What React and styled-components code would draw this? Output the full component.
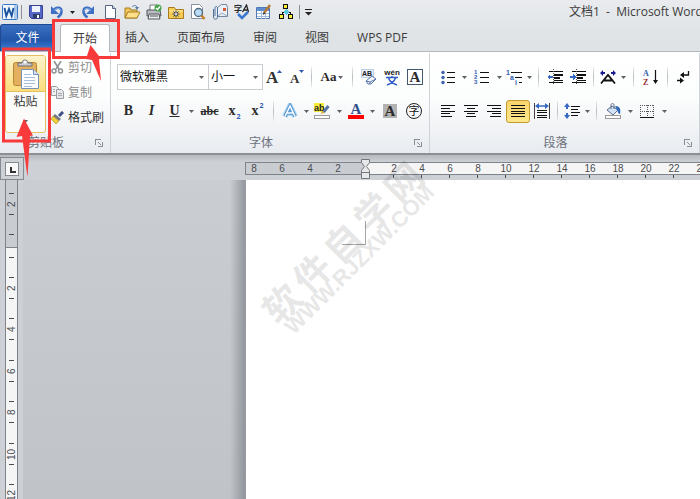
import React from 'react';
import styled, { createGlobalStyle, css } from 'styled-components';

const GlobalStyle = createGlobalStyle`
  * {
    box-sizing: border-box;
  }

  body {
    margin: 0;
    font-family: 'Open Sans', 'Noto Sans CJK SC', sans-serif;
    font-size: 12px;
    line-height: 16px;
    color: #3b3b3b;
  }

  button,
  select {
    font: inherit;
    color: inherit;
    margin: 0;
    padding: 0;
    border: 0;
    background: none;
  }
`;

const Window = styled.div`
  position: relative;
  display: flex;
  flex-direction: column;
  height: 100vh;
  overflow: hidden;
  background: #c9cdd2;
`;

const Header = styled.header`
  flex: none;
  background: linear-gradient(#e9ebef 0%, #e0e4e6 60%, #dfe3e5 100%);
`;

const TitleBar = styled.div`
  display: flex;
  align-items: center;
  height: 24px;
`;

const QuickButton = styled.button`
  display: flex;
  flex: none;
  align-items: center;
  justify-content: center;
  width: ${props => props.$width || 22}px;
  height: 22px;
`;

const QuickDivider = styled.span`
  flex: none;
  width: 1px;
  height: 14px;
  margin: 0 3px 0 2px;
  background: #8c9096;
`;

const WindowTitle = styled.h1`
  width: 131px;
  margin: 0 0 0 auto;
  font-size: 12px;
  font-weight: 400;
  white-space: pre;
`;

const TabBar = styled.nav`
  display: flex;
  height: 28px;
  border-bottom: 1px solid #b4b8bd;
`;

const FileTab = styled.button`
  width: 55px;
  margin-right: 4px;
  border: 1px solid #1d4a93;
  border-bottom: 0;
  border-radius: 3px 3px 0 0;
  background: linear-gradient(#3a70c2 0%, #2559ab 50%, #2258ad 60%, #3b83d8 100%);
  color: #fff;
`;

const Tab = styled.button`
  padding: 0 14px;

  ${props => props.$active && css`
    margin: 0 1px -1px;
    padding: 0 12px;
    border: 1px solid #b4b8bd;
    border-bottom: 0;
    border-radius: 3px 3px 0 0;
    background: #fff;
  `}
`;

const Ribbon = styled.section`
  display: flex;
  flex: none;
  height: 103px;
  padding-top: 1px;
  border-bottom: 2px solid #8b8f96;
  background: linear-gradient(#fff 0%, #fcfdfd 45%, #e8ebf0 100%);
`;

const Group = styled.div`
  display: flex;
  flex: none;
  flex-direction: column;
  border-right: 1px solid #cfd2d7;
`;

const GroupBody = styled.div`
  display: flex;
  flex: 1;
  flex-direction: column;
  gap: 6px;
  padding: 10px 3px 0 6px;
`;

const ClipboardBody = styled.div`
  display: flex;
  flex: 1;
  padding: 2px 6px 0 5px;
`;

const GroupFooter = styled.div`
  display: flex;
  align-items: center;
  height: 20px;
  padding-right: 4px;
`;

const GroupLabel = styled.span`
  flex: 1;
  color: #6c717c;
  text-align: center;
`;

const Launcher = styled.button`
  display: flex;
  width: 14px;
  height: 14px;
  align-items: center;
  justify-content: center;
`;

const PasteButton = styled.button`
  display: flex;
  flex-direction: column;
  align-items: center;
  width: 41px;
  height: 78px;
  border: 1px solid #e3c05d;
  border-radius: 3px;
  background: #fbfbfa;
  overflow: hidden;
`;

const PasteIconArea = styled.span`
  display: flex;
  align-items: center;
  justify-content: center;
  width: 100%;
  height: 37px;
  margin-bottom: 2px;
  border-bottom: 1px solid #e3c05d;
  background: linear-gradient(#fdf3cd, #fbdd7c);
`;

const ClipboardList = styled.div`
  display: flex;
  flex-direction: column;
  padding-left: 5px;
`;

const ClipboardButton = styled.button`
  display: flex;
  align-items: center;
  gap: 4px;
  height: 25px;
  color: ${props => (props.disabled ? '#8d8d8d' : '#2f2f2f')};
`;

const ToolRow = styled.div`
  display: flex;
  align-items: center;
  height: 28px;
`;

const ToolButton = styled.button`
  display: flex;
  flex: none;
  align-items: center;
  justify-content: center;
  gap: 2px;
  width: ${props => props.$width || 23}px;
  height: 23px;

  ${props => props.$active && css`
    border: 1px solid #c29a2e;
    border-radius: 3px;
    background: linear-gradient(#fbd46c, #fde88b);
  `}
`;

const CaretButton = styled(ToolButton)`
  width: 10px;
`;

const Divider = styled.span`
  flex: none;
  width: 1px;
  height: 20px;
  margin: 0 ${props => props.$gap || 4}px;
  background: linear-gradient(#e8e9ec, #b9bcc2, #e8e9ec);
`;

const Glyph = styled.span`
  font-family: 'Liberation Serif', serif;
  font-size: ${props => props.$size || 14}px;
  font-weight: 700;
  font-style: ${props => (props.$italic ? 'italic' : 'normal')};
  text-decoration: ${props => props.$line || 'none'};
  color: #2b2b2b;
`;

const Script = styled.small`
  align-self: ${props => (props.$up ? 'flex-start' : 'flex-end')};
  margin-left: -1px;
  font-size: 7px;
  font-weight: 700;
  line-height: 12px;
  color: #2f5cb0;
`;

const ComboBox = styled.label`
  position: relative;
  display: flex;
  flex: none;
  width: ${props => props.$width}px;
  height: 26px;
  margin-right: -1px;
  border: 1px solid #c9ccd1;
  background: #fff;

  select {
    width: 100%;
    padding: 0 2px;
    appearance: none;
    color: #111;
  }

  svg {
    position: absolute;
    top: 11px;
    right: 4px;
    pointer-events: none;
  }
`;

const Workspace = styled.main`
  display: flex;
  flex: 1;
  flex-direction: column;
  min-height: 0;
`;

const RulerBar = styled.div`
  display: flex;
  flex: none;
  align-items: flex-start;
  height: 25px;
  padding-top: 2px;
  background: linear-gradient(#b6b9be 0, #cdd0d5 7px);
`;

const TabSelector = styled.button`
  display: flex;
  flex: none;
  align-items: center;
  justify-content: center;
  width: 24px;
  height: 23px;
  border: 1px solid #868a90;
  background: #cdd0d5;
`;

const RulerTrack = styled.div`
  display: flex;
  flex: 1;
  min-width: 0;
  margin: 5px 0 0 221px;
`;

const RulerPart = styled.div`
  display: flex;
  flex: ${props => (props.$margin ? 'none' : '1')};
  justify-content: ${props => (props.$margin ? 'flex-end' : 'flex-start')};
  width: ${props => (props.$margin ? '121px' : 'auto')};
  height: 13px;
  padding: 0 ${props => (props.$margin ? 14 : 0)}px 0 ${props => (props.$margin ? 0 : 15)}px;
  border: solid #7f838b;
  border-width: 1px 0 1px ${props => (props.$margin ? 1 : 0)}px;
  background: ${props => (props.$margin ? '#c9cdd2' : '#f5f5f5')};
  min-width: 0;
`;

const RulerCell = styled.span`
  position: relative;
  flex: none;
  width: 28px;
  font-family: 'Liberation Sans', sans-serif;
  font-size: 10px;
  line-height: 11px;
  text-align: center;
  color: #4a4c50;

  &::after {
    content: '';
    position: absolute;
    left: 13px;
    top: 12px;
    width: 1px;
    height: 3px;
    background: ${props => (props.$tick ? '#4a4c50' : 'none')};
  }
`;

const IndentMarker = styled.svg`
  position: relative;
  flex: none;
  z-index: 1;
  margin: -4px -5px -6px;
`;

const Canvas = styled.div`
  display: flex;
  flex: 1;
  min-height: 0;
`;

const SideRuler = styled.div`
  display: flex;
  flex: none;
  flex-direction: column;
  width: 23px;
  padding: 0 5px;
  background: #cdd0d5;
  overflow: hidden;
`;

const SidePart = styled.div`
  flex: none;
  height: ${props => (props.$margin ? '68px' : 'auto')};
  padding-top: ${props => (props.$margin ? '3px' : '0')};
  border: solid #7f838b;
  border-width: 0 1px ${props => (props.$margin ? 1 : 0)}px;
  background: ${props => (props.$margin ? '#c9cdd2' : '#f5f5f5')};
`;

const SideCell = styled.div`
  display: flex;
  flex-direction: column;
  align-items: center;
  justify-content: center;
  height: 41px;

  &:nth-child(odd) {
    height: 42px;
  }
`;

const SideLead = styled.div`
  display: flex;
  align-items: center;
  justify-content: center;
  height: 19px;
`;

const SideTick = styled.i`
  width: 5px;
  height: 1px;
  background: #4a4c50;
`;

const SideNumber = styled.span`
  height: 20px;
  font-family: 'Liberation Sans', sans-serif;
  font-size: 10px;
  line-height: 11px;
  text-align: center;
  color: #4a4c50;
  writing-mode: vertical-rl;
  transform: rotate(180deg);
`;

const Gutter = styled.div`
  display: flex;
  flex: none;
  justify-content: flex-end;
  width: 223px;
  background: linear-gradient(#cacdd2, #c0c4c9);
`;

const PageShadow = styled.div`
  width: 16px;
  border-right: 1px solid #999ca1;
  background: linear-gradient(to right, rgba(130, 134, 140, 0), rgba(130, 134, 140, 0.75));
`;

const Paper = styled.article`
  position: relative;
  flex: 1;
  padding: 41px 0 0 96px;
  background: #fff;
`;

const MarginCorner = styled.div`
  width: 24px;
  height: 24px;
  border: solid #a6a6a6;
  border-width: 0 1px 1px 0;
`;

const Watermark = styled.div`
  position: absolute;
  left: -9px;
  top: 43px;
  width: 220px;
  color: #000;
  opacity: 0.09;
  pointer-events: none;
  transform: rotate(-45deg);
`;

const WatermarkName = styled.div`
  display: flex;
  justify-content: center;
  gap: 6px;
  font-size: 37px;
  font-weight: 700;
  line-height: 36px;
`;

const WatermarkUrl = styled.div`
  font-family: 'Liberation Sans', sans-serif;
  font-size: 22px;
  font-weight: 700;
  line-height: 12px;
  text-align: center;
`;

const Marks = styled.svg`
  position: absolute;
  left: 0;
  top: 0;
  pointer-events: none;
`;

const Icon = ({ size = 16, crisp, children }) => (
  <svg
    width={size}
    height={size}
    viewBox={`0 0 ${size} ${size}`}
    shapeRendering={crisp ? 'crispEdges' : 'auto'}
    fill="none"
    aria-hidden="true"
  >
    {children}
  </svg>
);

const Caret = ({ color = '#5c5f64' }) => (
  <svg width="5" height="3" viewBox="0 0 5 3" aria-hidden="true">
    <path d="M0 0h5L2.500 3z" fill={color} />
  </svg>
);

const WordIcon = () => (
  <Icon>
    <rect x=".5" y=".5" width="15" height="15" rx="1" fill="#f2f7fd" stroke="#3a78c8" />
    <path d="M13.500 1v14" stroke="#a9c8ec" strokeWidth="3" />
    <path d="M2.500 4l1.800 8 2.700-7 2.700 7 1.800-8" stroke="#1c559f" strokeWidth="1.900" />
  </Icon>
);

const SaveIcon = () => (
  <Icon>
    <path d="M1.500 1.500h13v13h-11l-2-2z" fill="#5667c8" stroke="#3a3f94" />
    <path d="M4 2h8v6H4z" fill="#eef3fb" />
    <path d="M5 10h7v4H5z" fill="#2b3f68" />
    <path d="M9 11h2v3H9z" fill="#fff" />
  </Icon>
);

const UndoIcon = ({ flip }) => (
  <Icon>
    <g transform={flip ? 'translate(16 0) scale(-1 1)' : undefined}>
      <path d="M4 7C7 2 13 3 12.500 8c-.3 2-1.500 4-4 5.500" stroke="#3e6fc4" strokeWidth="2.500" />
      <path d="M2 2v8h8z" fill="#3e6fc4" />
      <path d="M5 6.500C8 3.500 11.500 4 12 7" stroke="#8fb4ec" />
    </g>
  </Icon>
);

const NewIcon = () => (
  <Icon>
    <path d="M3.500 1.500h7l3 3v10h-10z" fill="#fbfdff" stroke="#53647f" />
    <path d="M10.500 1.500v3h3" fill="#d6e2f2" stroke="#53647f" />
  </Icon>
);

const OpenIcon = () => (
  <Icon>
    <path d="M1 4h5l1 2h6v8H1z" fill="#f0c557" stroke="#a57a22" />
    <path d="M1 14l3-6h12l-3 6z" fill="#ffe08a" stroke="#a57a22" />
    <path d="M8 3c2-2 4-2 5 0" stroke="#5679a8" />
    <path d="M11 3h4l-2 3z" fill="#5679a8" />
  </Icon>
);

const PrintIcon = () => (
  <Icon>
    <path d="M4 1h7v6H4z" fill="#fff" stroke="#74777e" />
    <path d="M1 6h13l1 6H1z" fill="#b9bcc3" stroke="#52555b" />
    <path d="M3 10h10l1 5H2z" fill="#e9ebee" stroke="#52555b" />
    <path d="M4 12h8" stroke="#52555b" />
    <circle cx="12" cy="4" r="3.500" fill="#46a24b" />
    <path d="M10 4l1.500 1.500L14 2.500" stroke="#fff" strokeWidth="1.300" />
  </Icon>
);

const FavoriteFolderIcon = () => (
  <Icon>
    <path d="M.5 3.500h6l1 2h8v9H.5z" fill="#f6cb51" stroke="#a57a22" />
    <path d="M1 7h14" stroke="#fff0b0" />
    <path d="M8 6.500v7M4.500 10h7M5.500 7.500l5 5M10.500 7.500l-5 5" stroke="#26386f" />
    <circle cx="8" cy="10" r="1" fill="#fff" />
  </Icon>
);

const PreviewIcon = () => (
  <Icon>
    <path d="M1.500.5h8l3 3v11h-11z" fill="#fff" stroke="#8791a3" />
    <circle cx="8.500" cy="8.500" r="4" fill="#b9dcf7" stroke="#52677e" strokeWidth="1.300" />
    <path d="M11.500 11.500l3 3.500" stroke="#c77e25" strokeWidth="2.500" />
  </Icon>
);

const MailIcon = () => (
  <Icon>
    <path d="M5.500 3.500l4-3h5l1 3v9h-10z" fill="#e8eff9" stroke="#74859f" />
    <path d="M6 12l4-3 5 3" stroke="#9aacbf" />
    <path d="M11 4h3v3h-3z" fill="#d65b34" />
    <path d="M1.500 5v8c0 3 4 3 4 0V4c0-2-2.500-2-2.500 0v8" stroke="#53739f" />
  </Icon>
);

const SpellIcon = () => (
  <Icon>
    <text x="0" y="8" fontSize="8" fontWeight="700" fill="#252525" fontFamily="Noto Sans CJK SC">字</text>
    <path d="M8.500 8l4-7 2 7M10 6h4" stroke="#252525" strokeWidth="1.300" />
    <path d="M4 10l4 4 6-6" stroke="#3a76d0" strokeWidth="2.500" />
  </Icon>
);

const DrawTableIcon = () => (
  <Icon>
    <path d="M.5 3.500h13v11H.5z" fill="#fff" stroke="#5179b3" />
    <path d="M1 4h12v3H1z" fill="#5e8ed2" />
    <path d="M1 9.500h12M1 12.500h12M5.500 7v8M9.500 7v8" stroke="#a3bbdc" />
    <path d="M8 9l6-8" stroke="#b57a35" strokeWidth="2.500" />
    <path d="M7 11l.5-3 2 1.500z" fill="#333" />
  </Icon>
);

const OrgChartIcon = () => (
  <Icon crisp>
    <path d="M8 5v5M4 10V8h3M12 10V8H9" stroke="#111" />
    <rect x="5.500" y=".5" width="4" height="4" fill="#f7ef39" stroke="#111" />
    <rect x="1.500" y="10.500" width="4" height="4" fill="#f7ef39" stroke="#111" />
    <rect x="10.500" y="10.500" width="4" height="4" fill="#f7ef39" stroke="#111" />
    <path d="M8 5l3 3-3 3-3-3z" fill="#54cbe0" />
  </Icon>
);

const PasteIcon = () => (
  <Icon size={32}>
    <rect x="3.500" y="4.500" width="23" height="23" rx="2" fill="#e3b060" stroke="#b98636" />
    <path d="M8 8V5h4c0-4 6-4 6 0h4v3z" fill="#c9ccd0" stroke="#6c6f73" />
    <circle cx="15" cy="4" r="1.500" fill="#fff" />
    <path d="M11.500 11.500h12l5 5v14h-17z" fill="#fbfdff" stroke="#7690b8" />
    <path d="M23.500 11.500v5h5" fill="#d2e1f3" stroke="#7690b8" />
    <path d="M14 16.500h7M14 19.500h11M14 22.500h11M14 25.500h11M14 28.500h8" stroke="#a7bedd" />
  </Icon>
);

const CutIcon = () => (
  <Icon size={13}>
    <path d="M3 0l5 8M10 0L5 8" stroke="#8e9196" strokeWidth="1.600" />
    <circle cx="3" cy="10" r="2" stroke="#8e9196" strokeWidth="1.500" />
    <circle cx="9.500" cy="10" r="2" stroke="#8e9196" strokeWidth="1.500" />
  </Icon>
);

const CopyIcon = () => (
  <Icon size={13}>
    <path d="M.5.5h5l2 2v7h-7z" fill="#f2f2f3" stroke="#9a9da2" />
    <path d="M5.500 3.500h5l2 2v7h-7z" fill="#e6e7e9" stroke="#9a9da2" />
    <path d="M7 7.500h4M7 9.500h4M2 3.500h2M2 5.500h2" stroke="#a5a8ad" />
  </Icon>
);

const BrushIcon = () => (
  <Icon size={13}>
    <path d="M12 1L8 5" stroke="#3d4f86" strokeWidth="3" />
    <path d="M4 3l6 5-2 2-6-5z" fill="#6f7684" />
    <path d="M2 5l6 5-3 3-5-5z" fill="#f0cf3c" stroke="#a88a1d" strokeWidth=".6" />
  </Icon>
);

const LauncherIcon = () => (
  <Icon size={8} crisp>
    <path d="M.5 6V.5H6M3 3l3 3M7.500 3v4.500H3" stroke="#898d94" />
  </Icon>
);

const FontSizeIcon = ({ down }) => (
  <Icon size={18}>
    <text x={down ? 2 : 1} y="15" fontSize={down ? 13 : 17} fontWeight="700" fontFamily="Liberation Serif" fill="#333">A</text>
    <path d={down ? 'M11 2h5l-2.500 3z' : 'M12 5h5l-2.500-3z'} fill="#2f5cb0" />
  </Icon>
);

const EraserIcon = () => (
  <Icon>
    <rect x=".5" y=".5" width="12" height="8" fill="#e5eefb" stroke="#c3cfe2" />
    <text x="1" y="7" fontSize="7" fontWeight="700" fontFamily="Liberation Sans" fill="#222">AB</text>
    <path d="M5 12l6-5 4 3-5 5H7z" fill="#f3f6fb" stroke="#5875aa" />
    <path d="M5 12l4 1 6-3M9 13v2" stroke="#5875aa" />
  </Icon>
);

const PhoneticIcon = () => (
  <Icon size={18}>
    <text x="9" y="7" textAnchor="middle" fontSize="8" fontWeight="700" fontFamily="Liberation Sans" fill="#222">wén</text>
    <path d="M3 9.500h12M9 8v2M5.500 10c1 3 4 5.500 8.500 7M12.500 10c-1 3-4 5.500-8.500 7" stroke="#2f5cc4" strokeWidth="1.500" />
  </Icon>
);

const BoxedIcon = ({ shaded }) => (
  <Icon>
    {shaded
      ? <rect x="1" y="1" width="14" height="14" fill="#b3b3b3" />
      : <rect x=".5" y=".5" width="15" height="15" fill="#fff" stroke="#46586f" />}
    <text x="8" y="13" textAnchor="middle" fontSize="15" fontWeight="700" fontFamily="Liberation Serif" fill="#2b2b2b">A</text>
  </Icon>
);

const EncloseIcon = () => (
  <Icon>
    <circle cx="8" cy="8" r="7.500" stroke="#222" />
    <text x="8" y="12" textAnchor="middle" fontSize="11" fontFamily="Noto Sans CJK SC" fill="#111">字</text>
  </Icon>
);

const TextEffectIcon = () => (
  <Icon>
    <path d="M3 13.500L8 3l5 10.500M5 10h6" stroke="#b5daf5" strokeWidth="6" strokeLinejoin="round" />
    <path d="M3 13.500L8 3l5 10.500M5 10h6" stroke="#4f93cf" strokeWidth="3.500" />
    <path d="M3 13.500L8 3l5 10.500M5 10h6" stroke="#fff" strokeWidth="1.500" />
  </Icon>
);

const HighlightIcon = () => (
  <Icon size={17}>
    <rect x="0" y="0" width="10" height="9" fill="#f6ee3a" />
    <text x="0" y="8" fontSize="9" fontWeight="700" fontFamily="Liberation Sans" fill="#222">ab</text>
    <path d="M9.500 9l5-6" stroke="#56749f" strokeWidth="3" />
    <path d="M8.500 8l2 2-4 1z" fill="#dca633" />
    <rect x=".5" y="12.500" width="15" height="3" fill="#fff" stroke="#9b9b9b" />
  </Icon>
);

const FontColorIcon = () => (
  <Icon>
    <text x="8" y="11" textAnchor="middle" fontSize="15" fontWeight="700" fontFamily="Liberation Serif" fill="#304f8b">A</text>
    <rect x="0" y="12" width="16" height="4" fill="#f00" />
  </Icon>
);

const BulletIcon = () => (
  <Icon>
    <path d="M7 3.500h8M7 8.500h8M7 13.500h8" stroke="#111" />
    <g fill="#3c62ac">
      <circle cx="3" cy="3.500" r="1.700" />
      <circle cx="3" cy="8.500" r="1.700" />
      <circle cx="3" cy="13.500" r="1.700" />
    </g>
  </Icon>
);

const NumberIcon = () => (
  <Icon>
    <path d="M6 3.500h9M6 8.500h9M6 13.500h9" stroke="#111" />
    <g fontSize="6" fontWeight="700" fontFamily="Liberation Sans" fill="#2f5cb0">
      <text x="0" y="5">1</text>
      <text x="0" y="10">2</text>
      <text x="0" y="15">3</text>
    </g>
  </Icon>
);

const MultilevelIcon = () => (
  <Icon size={17}>
    <path d="M5 3.500h11M9 8.500h7M13 13.500h3" stroke="#111" />
    <g fontSize="7" fontWeight="700" fontFamily="Liberation Sans" fill="#2f5cb0">
      <text x="0" y="6">1</text>
      <text x="4" y="11">a</text>
      <text x="9" y="16">i</text>
    </g>
  </Icon>
);

const IndentIcon = ({ right }) => (
  <Icon crisp>
    <path d="M2 2.500h14M7 5.500h9M7 8.500h6M7 11.500h9M2 13.500h14" stroke="#111" />
    <path d="M7 5h9v2H7zM7 8h6v2H7z" fill="#111" />
    <path d="M6.500 0v16" stroke="#555" strokeDasharray="1 1" />
    <path d={right ? 'M0 7h3V5l3 3-3 3V9H0z' : 'M6 7H3V5L0 8l3 3V9h3z'} fill="#3569c4" />
  </Icon>
);

const AsianLayoutIcon = () => (
  <Icon>
    <path d="M1 14.500L8 6l7 8.500M4 11.500h8" stroke="#111" strokeWidth="1.800" />
    <path d="M0 4l3-3v2h2v2H3v2zM16 4l-3-3v2h-2v2h2v2z" fill="#1b1b94" />
  </Icon>
);

const SortIcon = () => (
  <Icon size={18}>
    <g fontSize="8" fontWeight="700" fontFamily="Liberation Serif">
      <text x="1" y="8" fill="#2f5cb0">A</text>
      <text x="1" y="17" fill="#9b2e34">Z</text>
    </g>
    <path d="M13.500 2v11" stroke="#111" strokeWidth="1.200" />
    <path d="M11 12h5l-2.500 4z" fill="#111" />
  </Icon>
);

const ShowMarksIcon = () => (
  <Icon>
    <path d="M12.500 2v4H7M1 11.500h5" stroke="#111" strokeWidth="1.300" />
    <path d="M8 3L4 6l4 3zM4 8.500l4 3-4 3z" fill="#111" />
  </Icon>
);

const alignLines = {
  left: 'M1 2.500h14M1 5.500h9M1 8.500h14M1 10.500h9M1 13.500h11',
  center: 'M1 2.500h14M4 5.500h8M1 8.500h14M4 10.500h8M3 13.500h10',
  right: 'M1 2.500h14M6 5.500h9M1 8.500h14M6 10.500h9M4 13.500h11',
  justify: 'M1 2.500h14M1 5.500h14M1 8.500h14M1 10.500h14M1 13.500h14',
};

const AlignIcon = ({ type }) => (
  <Icon crisp>
    <path d={alignLines[type]} stroke="#111" />
  </Icon>
);

const DistributeIcon = () => (
  <Icon>
    <path d="M.5 0v16M15.500 0v16" stroke="#444" />
    <path d="M3 7.500h10M3 9.500h10M3 12.500h10M3 14.500h10" stroke="#111" />
    <path d="M4 3h8" stroke="#3569c4" strokeWidth="1.500" />
    <path d="M5 0v6L1 3zM11 0v6l4-3z" fill="#3569c4" />
  </Icon>
);

const LineSpacingIcon = () => (
  <Icon>
    <path d="M7 3.500h9M7 6.500h7M7 9.500h9M7 12.500h7" stroke="#111" />
    <path d="M3 0l3 4H4v2H2V4H0zM3 16l3-4H4v-2H2v2H0z" fill="#3569c4" />
  </Icon>
);

const ShadingIcon = () => (
  <Icon>
    <path d="M2 7l5-4 6 4-5 5z" fill="#d3e2f4" stroke="#5c6f8c" />
    <path d="M6 6V2c0-2 3-2 3 0v4" stroke="#5c6f8c" />
    <path d="M10 3c5 0 6 3 5 8-2 0-2-3-3-4z" fill="#2d67bb" />
    <rect x=".5" y="12.500" width="15" height="3" fill="#fff" stroke="#9b9b9b" />
  </Icon>
);

const BorderIcon = () => (
  <Icon crisp>
    <path d="M1 2.500h14M1 8.500h14M1.500 2v11M8.500 2v11M14.500 2v11" stroke="#555" strokeDasharray="1 1" />
    <path d="M1 14.500h14" stroke="#111" />
  </Icon>
);

const quickItems = [
  { label: '新建', icon: <NewIcon /> },
  { label: '打开', icon: <OpenIcon /> },
  { label: '打印', icon: <PrintIcon /> },
  { label: '收藏夹', icon: <FavoriteFolderIcon /> },
  { label: '打印预览', icon: <PreviewIcon /> },
  { label: '电子邮件', icon: <MailIcon /> },
  { label: '拼写和语法', icon: <SpellIcon /> },
  { label: '绘制表格', icon: <DrawTableIcon /> },
  { label: '组织结构图', icon: <OrgChartIcon /> },
];

const tabs = ['开始', '插入', '页面布局', '审阅', '视图', 'WPS PDF'];
const marginNumbers = [8, 6, 4, 2];
const rulerNumbers = [2, 4, 6, 8, 10, 12, 14, 16, 18, 20, 22, 24];
const sideNumbers = [2, 4, 6, 8, 10, 12];

function Footer({ label }) {
  return (
    <GroupFooter>
      <GroupLabel>{label}</GroupLabel>
      <Launcher aria-label={`${label}选项`}><LauncherIcon /></Launcher>
    </GroupFooter>
  );
}

function MoreButton({ label }) {
  return (
    <CaretButton aria-label={label}><Caret /></CaretButton>
  );
}

function ClipboardGroup() {
  return (
    <Group>
      <ClipboardBody>
        <PasteButton>
          <PasteIconArea><PasteIcon /></PasteIconArea>
          粘贴
          <QuickButton as="span"><Caret /></QuickButton>
        </PasteButton>
        <ClipboardList>
          <ClipboardButton disabled><CutIcon />剪切</ClipboardButton>
          <ClipboardButton disabled><CopyIcon />复制</ClipboardButton>
          <ClipboardButton><BrushIcon />格式刷</ClipboardButton>
        </ClipboardList>
      </ClipboardBody>
      <Footer label="剪贴板" />
    </Group>
  );
}

function FontGroup() {
  return (
    <Group>
      <GroupBody>
        <ToolRow>
          <ComboBox $width={92}>
            <select aria-label="字体" defaultValue="微软雅黑">
              <option>微软雅黑</option>
              <option>宋体</option>
            </select>
            <Caret />
          </ComboBox>
          <ComboBox $width={55}>
            <select aria-label="字号" defaultValue="小一">
              <option>小一</option>
              <option>五号</option>
            </select>
            <Caret />
          </ComboBox>
          <ToolButton aria-label="增大字体" $width={24}><FontSizeIcon /></ToolButton>
          <ToolButton aria-label="缩小字体" $width={21}><FontSizeIcon down /></ToolButton>
          <Divider />
          <ToolButton aria-label="更改大小写" $width={32}><Glyph $size={13}>Aa</Glyph><Caret /></ToolButton>
          <Divider />
          <ToolButton aria-label="清除格式"><EraserIcon /></ToolButton>
          <ToolButton aria-label="拼音指南"><PhoneticIcon /></ToolButton>
          <ToolButton aria-label="字符边框"><BoxedIcon /></ToolButton>
        </ToolRow>
        <ToolRow>
          <ToolButton aria-label="加粗"><Glyph>B</Glyph></ToolButton>
          <ToolButton aria-label="倾斜"><Glyph $italic>I</Glyph></ToolButton>
          <ToolButton aria-label="下划线"><Glyph $line="underline">U</Glyph></ToolButton>
          <MoreButton label="下划线样式" />
          <ToolButton aria-label="删除线" $width={27}><Glyph $size={12} $line="line-through">abc</Glyph></ToolButton>
          <ToolButton aria-label="下标"><Glyph>x</Glyph><Script>2</Script></ToolButton>
          <ToolButton aria-label="上标"><Glyph>x</Glyph><Script $up>2</Script></ToolButton>
          <Divider />
          <ToolButton aria-label="文本效果"><TextEffectIcon /></ToolButton>
          <MoreButton label="更多文本效果" />
          <ToolButton aria-label="突出显示"><HighlightIcon /></ToolButton>
          <MoreButton label="突出显示颜色" />
          <ToolButton aria-label="字体颜色"><FontColorIcon /></ToolButton>
          <MoreButton label="更多字体颜色" />
          <ToolButton aria-label="字符底纹" $width={25}><BoxedIcon shaded /></ToolButton>
          <ToolButton aria-label="带圈字符"><EncloseIcon /></ToolButton>
        </ToolRow>
      </GroupBody>
      <Footer label="字体" />
    </Group>
  );
}

function ParagraphGroup() {
  return (
    <Group>
      <GroupBody>
        <ToolRow>
          <ToolButton aria-label="项目符号"><BulletIcon /></ToolButton>
          <MoreButton label="更多项目符号" />
          <ToolButton aria-label="编号" $width={25}><NumberIcon /></ToolButton>
          <MoreButton label="更多编号" />
          <ToolButton aria-label="多级列表" $width={20}><MultilevelIcon /></ToolButton>
          <MoreButton label="更多多级列表" />
          <Divider />
          <ToolButton aria-label="减少缩进量"><IndentIcon /></ToolButton>
          <ToolButton aria-label="增加缩进量"><IndentIcon right /></ToolButton>
          <Divider />
          <ToolButton aria-label="中文版式" $width={20}><AsianLayoutIcon /></ToolButton>
          <MoreButton label="更多中文版式" />
          <Divider $gap={5} />
          <ToolButton aria-label="排序" $width={24}><SortIcon /></ToolButton>
          <Divider />
          <ToolButton aria-label="显示编辑标记" $width={24}><ShowMarksIcon /></ToolButton>
        </ToolRow>
        <ToolRow>
          <ToolButton aria-label="左对齐"><AlignIcon type="left" /></ToolButton>
          <ToolButton aria-label="居中"><AlignIcon type="center" /></ToolButton>
          <ToolButton aria-label="右对齐" $width={24}><AlignIcon type="right" /></ToolButton>
          <ToolButton aria-label="两端对齐" $width={24} $active><AlignIcon type="justify" /></ToolButton>
          <ToolButton aria-label="分散对齐"><DistributeIcon /></ToolButton>
          <Divider />
          <ToolButton aria-label="行距" $width={20}><LineSpacingIcon /></ToolButton>
          <MoreButton label="更多行距" />
          <Divider />
          <ToolButton aria-label="底纹" $width={24}><ShadingIcon /></ToolButton>
          <MoreButton label="底纹颜色" />
          <ToolButton aria-label="框线" $width={24}><BorderIcon /></ToolButton>
          <MoreButton label="更多框线" />
        </ToolRow>
      </GroupBody>
      <Footer label="段落" />
    </Group>
  );
}

function App() {
  return (
    <Window>
      <GlobalStyle />
      <Header>
        <TitleBar>
          <QuickButton aria-label="Word" $width={19}><WordIcon /></QuickButton>
          <QuickDivider />
          <QuickButton aria-label="保存"><SaveIcon /></QuickButton>
          <QuickButton aria-label="撤消" $width={20}><UndoIcon /></QuickButton>
          <QuickButton aria-label="撤消列表" $width={10}><Caret color="#222" /></QuickButton>
          <QuickButton aria-label="恢复"><UndoIcon flip /></QuickButton>
          {quickItems.map(item => (
            <QuickButton key={item.label} aria-label={item.label}>{item.icon}</QuickButton>
          ))}
          <QuickDivider />
          <QuickButton aria-label="自定义快速访问工具栏" $width={12}>
            <Icon size={8}>
              <path d="M0 1.500h7" stroke="#222" />
              <path d="M0 4h7L3.500 7.500z" fill="#222" />
            </Icon>
          </QuickButton>
          <WindowTitle>{'文档1  -  Microsoft Word'}</WindowTitle>
        </TitleBar>
        <TabBar>
          <FileTab>文件</FileTab>
          {tabs.map(tab => (
            <Tab key={tab} $active={tab === '开始'}>{tab}</Tab>
          ))}
        </TabBar>
      </Header>

      <Ribbon>
        <ClipboardGroup />
        <FontGroup />
        <ParagraphGroup />
      </Ribbon>

      <Workspace>
        <RulerBar>
          <TabSelector aria-label="制表符">
            <Icon size={14} crisp>
              <rect x=".5" y=".5" width="13" height="13" fill="#f8f8f8" stroke="#868a90" />
              <path d="M6 5v5h5" stroke="#333" strokeWidth="2" />
            </Icon>
          </TabSelector>
          <RulerTrack>
            <RulerPart $margin>
              {marginNumbers.map(n => <RulerCell key={n}>{n}</RulerCell>)}
            </RulerPart>
            <IndentMarker width="9" height="23" viewBox="0 0 9 23">
              <path d="M.5 1.500h8v3l-3 4 3 4v8h-8v-8l3-4-3-4z" fill="#e7e8ea" stroke="#74777c" />
              <path d="M0 14.500h9" stroke="#74777c" />
            </IndentMarker>
            <RulerPart>
              {rulerNumbers.map(n => <RulerCell key={n} $tick>{n}</RulerCell>)}
            </RulerPart>
          </RulerTrack>
        </RulerBar>
        <Canvas>
          <SideRuler>
            <SidePart $margin>
              <SideCell><SideTick /><SideNumber>2</SideNumber><SideTick /></SideCell>
              <SideLead><SideTick /></SideLead>
            </SidePart>
            <SidePart>
              <SideLead><SideTick /></SideLead>
              {sideNumbers.map(n => (
                <SideCell key={n}><SideTick /><SideNumber>{n}</SideNumber><SideTick /></SideCell>
              ))}
            </SidePart>
          </SideRuler>
          <Gutter><PageShadow /></Gutter>
          <Paper>
            <MarginCorner />
            <Watermark>
              <WatermarkName>
                {'软件自学网'.split('').map(char => <span key={char}>{char}</span>)}
              </WatermarkName>
              <WatermarkUrl>WWW.RJZXW.COM</WatermarkUrl>
            </Watermark>
          </Paper>
        </Canvas>
      </Workspace>

      <Marks width="130" height="184" viewBox="0 0 130 184" fill="none" aria-hidden="true">
        <rect x="3.500" y="49" width="46" height="92" stroke="#f93a3a" strokeWidth="3" />
        <rect x="53.500" y="20.500" width="65" height="37" stroke="#f93a3a" strokeWidth="3" />
        <path d="M24 118.500L33 135.500L30 136L27.500 177L22 136L16.500 137z" fill="#f93a3a" />
        <path d="M90.500 45L100.500 58L99 59.500L101 81L92 60L86 59z" fill="#f93a3a" />
      </Marks>
    </Window>
  );
}

export default App;
